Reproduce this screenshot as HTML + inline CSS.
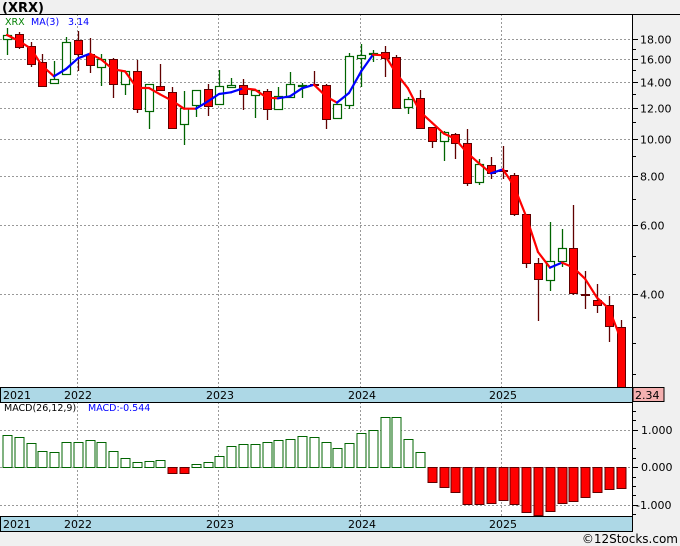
<!DOCTYPE html>
<html><head><meta charset="utf-8"><style>
html,body{margin:0;padding:0;background:#f0f0f0;width:680px;height:546px;overflow:hidden}
svg{display:block;font-family:"DejaVu Sans","Liberation Sans",sans-serif}
</style></head><body>
<svg id="s" width="680" height="546" xmlns="http://www.w3.org/2000/svg">
<rect x="0" y="0" width="680" height="546" fill="#f0f0f0"/>
<text x="2" y="12" font-size="13" font-weight="bold" fill="#000">(XRX)</text>
<rect x="0" y="14" width="632" height="373" fill="#fff"/>
<rect x="0" y="402" width="632" height="114" fill="#fff"/>
<g id="g"></g>
<line x1="0" y1="14.5" x2="680" y2="14.5" stroke="#000"/>
<line x1="632.5" y1="14" x2="632.5" y2="531" stroke="#000"/>
<rect x="0.5" y="387.5" width="632" height="15" fill="#add8e6" stroke="#000"/>
<rect x="0.5" y="516.5" width="632" height="15" fill="#add8e6" stroke="#000"/>
<g font-size="11" fill="#000">
<text x="3" y="399">2021</text><text x="64" y="399">2022</text><text x="206" y="399">2023</text><text x="348" y="399">2024</text><text x="489" y="399">2025</text>
<text x="3" y="528">2021</text><text x="64" y="528">2022</text><text x="206" y="528">2023</text><text x="348" y="528">2024</text><text x="489" y="528">2025</text>
</g>
<rect x="633" y="387.5" width="31" height="14" fill="#f4b0b0" stroke="#000"/>
<text x="635" y="399" font-size="11">2.34</text>
<text x="5" y="25" font-size="9.5" fill="#008000">XRX</text>
<text x="31" y="25" font-size="9.5" fill="#0000ff">MA(3)</text>
<text x="68" y="25" font-size="9.5" fill="#0000ff">3.14</text>
<text x="4" y="411" font-size="9.5" fill="#000">MACD(26,12,9)</text>
<text x="88" y="411" font-size="9.5" fill="#0000ff">MACD:-0.544</text>
<text x="678" y="543" font-size="12" text-anchor="end" fill="#000">©12Stocks.com</text>
</svg>
<script>
var g=document.getElementById('g'),h='';
function Y(p){return 39+169.5*Math.log(18/p);}
[18,16,14,12,10,8,6,4].forEach(function(p){var y=Math.round(Y(p))+.5;h+='<line x1="0" y1="'+y+'" x2="632" y2="'+y+'" stroke="#999" stroke-dasharray="2,2"/>';h+='<line x1="632" y1="'+y+'" x2="638" y2="'+y+'" stroke="#000"/>';h+='<text x="640" y="'+(y+4)+'" font-size="11">'+p.toFixed(2)+'</text>';});
[17,15,13,11,9,7,5,4.5,3.5,3,2.5].forEach(function(p){var y=Math.round(Y(p))+.5;h+='<line x1="632" y1="'+y+'" x2="636" y2="'+y+'" stroke="#000"/>';});
[430,467,505].forEach(function(y,i){h+='<line x1="0" y1="'+(y+.5)+'" x2="632" y2="'+(y+.5)+'" stroke="#999" stroke-dasharray="2,2"/><line x1="632" y1="'+(y+.5)+'" x2="638" y2="'+(y+.5)+'" stroke="#000"/>';h+='<text x="'+(i==2?636:641)+'" y="'+(y+4)+'" font-size="11">'+['1.000','0.000','-1.000'][i]+'</text>';});
[411,420,448,458,477,486,495,514].forEach(function(y){h+='<line x1="632" y1="'+(y+.5)+'" x2="636" y2="'+(y+.5)+'" stroke="#000"/>';});
[77,218,360,501].forEach(function(x){h+='<line x1="'+(x+.5)+'" y1="14" x2="'+(x+.5)+'" y2="387" stroke="#999" stroke-dasharray="2,2"/><line x1="'+(x+.5)+'" y1="402" x2="'+(x+.5)+'" y2="516" stroke="#999" stroke-dasharray="2,2"/>';});
var C=[[35,39,28,55,'g'],[34,47,32,49,'r'],[46,64,42,67,'r'],[62,86,54,87,'r'],[79,83,61,83,'g'],[42,74,37,75,'g'],[40,54,31,71,'r'],[54,65,38,73,'r'],[59,67,54,86,'g'],[59,84,58,98,'r'],[71,84,71,95,'g'],[71,109,60,113,'r'],[84,111,84,129,'g'],[86,90,64,90,'r'],[92,128,87,129,'r'],[108,124,91,145,'g'],[90,105,90,117,'g'],[89,106,84,116,'r'],[86,104,70,104,'g'],[85,87,78,87,'g'],[85,94,79,110,'r'],[90,95,90,118,'g'],[91,109,89,120,'r'],[96,109,87,110,'g'],[84,97,72,97,'g'],[85,86,83,98,'g'],[84,85,71,85,'r'],[85,119,84,129,'r'],[104,118,104,119,'g'],[56,105,53,109,'g'],[55,58,44,87,'g'],[53,54,50,62,'g'],[52,58,46,77,'r'],[57,108,55,108,'r'],[99,107,97,114,'g'],[98,128,90,129,'r'],[127,141,127,148,'r'],[132,141,131,161,'g'],[134,143,133,159,'r'],[143,183,129,186,'r'],[164,182,159,185,'g'],[165,173,157,179,'r'],[170,171,146,179,'r'],[175,214,173,216,'r'],[214,263,214,268,'r'],[263,279,258,321,'r'],[261,280,222,291,'g'],[248,261,229,267,'g'],[248,293,205,295,'r'],[294,295,271,309,'r'],[300,305,284,313,'r'],[305,326,296,342,'r'],[327,387,320,387,'r']];
var X=function(i){return Math.round(7+11.8*i);};
var closes=[];
C.forEach(function(c,i){var x=X(i);var col=c[4]=='g'?'#006400':'#600000';
h+='<line x1="'+(x+.5)+'" y1="'+c[2]+'" x2="'+(x+.5)+'" y2="'+c[3]+'" stroke="'+col+'" stroke-width="1.3"/>';
var bh=Math.max(1,c[1]-c[0]);
if(c[4]=='g'){h+='<rect x="'+(x-3.5)+'" y="'+(c[0]+.5)+'" width="8" height="'+bh+'" fill="#fff" stroke="#006400" stroke-width="1.2"/>';closes.push(c[0]);}
else{h+='<rect x="'+(x-3.5)+'" y="'+(c[0]+.5)+'" width="8" height="'+bh+'" fill="#ff0000" stroke="#600000" stroke-width="1"/>';closes.push(c[1]);}
});
var ma=[];for(var i=0;i<closes.length;i++){var a=closes.slice(Math.max(0,i-2),i+1);ma.push(a.reduce(function(s,v){return s+v},0)/a.length);}
for(var i=1;i<ma.length;i++){h+='<line x1="'+X(i-1)+'" y1="'+ma[i-1]+'" x2="'+X(i)+'" y2="'+ma[i]+'" stroke="'+(ma[i]<ma[i-1]?'#0000ff':'#ff0000')+'" stroke-width="2.2" stroke-linecap="round"/>';}
var M=[435,437,443,451,452,442,442,440,442,451,458,462,461,460,473,473,464,462,456,446,444,444,442,440,439,436,437,442,448,443,433,430,417,417,439,452,482,487,492,504,504,503,500,504,512,515,511,503,501,497,492,489,488];
M.forEach(function(v,i){var x=X(i)-4.5;if(v<=467){h+='<rect x="'+(x+.5)+'" y="'+(v+.5)+'" width="9" height="'+(467-v)+'" fill="#fff" stroke="#006400"/>';}else{h+='<rect x="'+(x+.5)+'" y="467.5" width="9" height="'+(v-467)+'" fill="#ff0000" stroke="#600000"/>';}});
g.innerHTML=h;
</script>
</body></html>
